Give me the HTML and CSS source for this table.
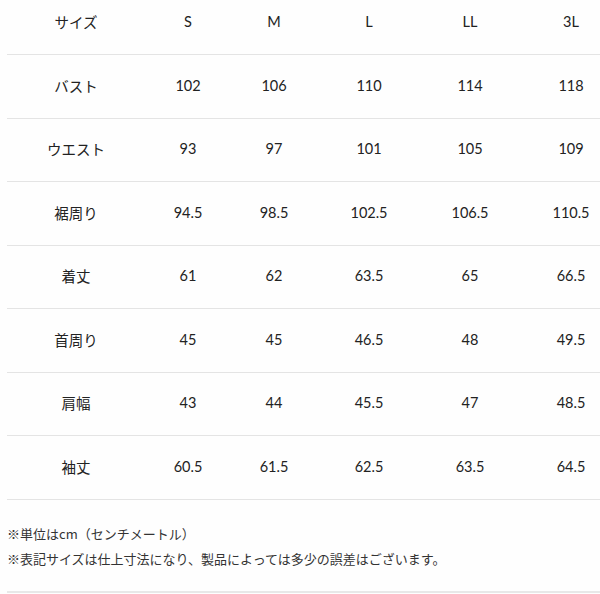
FILE: index.html
```html
<!DOCTYPE html>
<html lang="ja">
<head>
<meta charset="utf-8">
<link rel="stylesheet" href="styles.css">
</head>
<body>
<div class="page">
  <div class="table">
    <div class="row head">
      <div class="cell label">サイズ</div><div class="cell">S</div><div class="cell">M</div><div class="cell">L</div><div class="cell">LL</div><div class="cell">3L</div>
    </div>
    <div class="row">
      <div class="cell label">バスト</div><div class="cell">102</div><div class="cell">106</div><div class="cell">110</div><div class="cell">114</div><div class="cell">118</div>
    </div>
    <div class="row">
      <div class="cell label">ウエスト</div><div class="cell">93</div><div class="cell">97</div><div class="cell">101</div><div class="cell">105</div><div class="cell">109</div>
    </div>
    <div class="row">
      <div class="cell label">裾周り</div><div class="cell">94.5</div><div class="cell">98.5</div><div class="cell">102.5</div><div class="cell">106.5</div><div class="cell">110.5</div>
    </div>
    <div class="row">
      <div class="cell label">着丈</div><div class="cell">61</div><div class="cell">62</div><div class="cell">63.5</div><div class="cell">65</div><div class="cell">66.5</div>
    </div>
    <div class="row">
      <div class="cell label">首周り</div><div class="cell">45</div><div class="cell">45</div><div class="cell">46.5</div><div class="cell">48</div><div class="cell">49.5</div>
    </div>
    <div class="row">
      <div class="cell label">肩幅</div><div class="cell">43</div><div class="cell">44</div><div class="cell">45.5</div><div class="cell">47</div><div class="cell">48.5</div>
    </div>
    <div class="row">
      <div class="cell label">袖丈</div><div class="cell">60.5</div><div class="cell">61.5</div><div class="cell">62.5</div><div class="cell">63.5</div><div class="cell">64.5</div>
    </div>
  </div>
  <div class="notes">
    <p>※単位はcm（センチメートル）</p>
    <p>※表記サイズは仕上寸法になり、製品によっては多少の誤差はございます。</p>
  </div>
</div>
</body>
</html>
```

FILE: styles.css
```css
html, body {
  margin: 0;
  padding: 0;
  background: #fefefe;
  overflow: hidden;
}
.page {
  width: 620px;
  margin-left: 7px;
  margin-top: -8.5px;
  font-family: "Lato", "Noto Sans CJK JP", sans-serif;
  color: #222;
}
.row {
  display: grid;
  grid-template-columns: 138px 86px 86px 104px 98px 104px;
  height: 63.5px;
  box-sizing: border-box;
  padding-bottom: 2px;
  border-bottom: 1px solid #e4e4e4;
  align-items: center;
  font-size: 14.5px;
}
.cell {
  text-align: center;
}
.label {
  font-family: "Noto Sans CJK JP", sans-serif;
  font-size: 14.5px;
}
.notes {
  padding: 21px 0 20px;
  border-bottom: 2px solid #e8e8e8;
  font-family: "Noto Sans CJK JP", sans-serif;
  font-size: 13px;
  color: #333;
}
.notes p {
  margin: 0;
  line-height: 25px;
}
```
